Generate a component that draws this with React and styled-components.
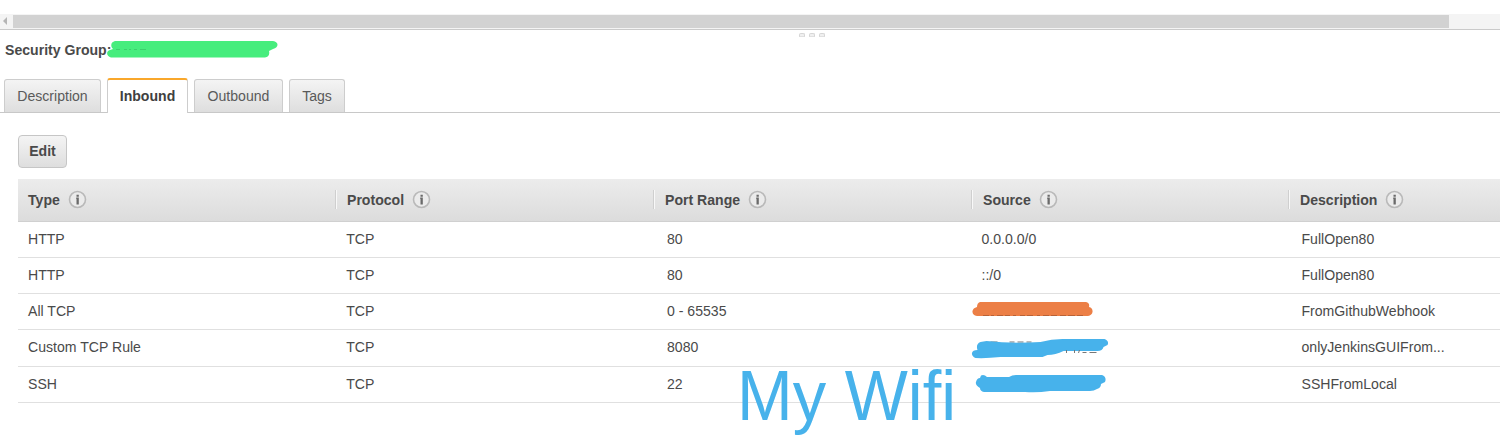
import React from "react";
import styled, { createGlobalStyle } from "styled-components";

const Global = createGlobalStyle`
  * { box-sizing: border-box; }
  body { margin: 0; background: #fff; overflow: hidden; }
`;

const Page = styled.main`
  position: relative;
  height: 447px;
  padding-top: 14px;
  overflow: hidden;
  font: 14.08px/20px "Liberation Sans", Arial, sans-serif;
  color: #4a4a4a;
  background: #fff;
`;

const ScrollBar = styled.div`
  display: flex;
  align-items: center;
  height: 16px;
  padding-bottom: 1px;
  background: #f4f4f4;
  border-bottom: 1px solid #cacaca;
`;

const ScrollArrow = styled.div`
  width: 13px;
  padding-left: 3px;
  display: flex;
`;

const ScrollThumb = styled.div`
  width: 1436px;
  height: 13px;
  background: #d2d2d2;
`;

const Splitter = styled.div`
  display: flex;
  height: 10px;
  gap: 4px;
  padding: 3px 0 0 799px;
`;

const Grip = styled.span`
  width: 6px;
  height: 4px;
  border: 1px solid #d6d6d6;
  border-bottom-color: #e0e0e0;
  border-radius: 2px 2px 0 0;
  background: #f0f0f0;
`;

const Title = styled.h1`
  display: flex;
  margin: 0;
  height: 20px;
  padding-left: 5px;
  font-size: 14.08px;
  line-height: 20px;
`;

const Scribble = styled.svg`
  display: block;
  flex: none;
  overflow: visible;
  margin-left: ${(p) => p.$left || 0}px;
  margin-bottom: ${(p) => p.$lift || 0}px;
`;

const Tabs = styled.nav`
  display: flex;
  align-items: flex-end;
  gap: 6px;
  height: 53px;
  padding-left: 4px;
  border-bottom: 1px solid #c8c8c8;
`;

const Tab = styled.button`
  width: ${(p) => p.$width}px;
  height: ${(p) => (p.$active ? 35 : 33)}px;
  margin-bottom: ${(p) => (p.$active ? -1 : 0)}px;
  padding: ${(p) => (p.$active ? "0 0 2px" : "0")};
  border: 1px solid #cdcdcd;
  border-top: ${(p) => (p.$active ? "2px solid #f9a72b" : "1px solid #cdcdcd")};
  border-bottom: 0;
  border-radius: 3px 3px 0 0;
  background: ${(p) => (p.$active ? "#fff" : "linear-gradient(#f4f4f4, #dedede)")};
  color: ${(p) => (p.$active ? "#404040" : "#5a5a5a")};
  font: ${(p) => (p.$active ? "bold" : "normal")} 14.08px/30px "Liberation Sans", Arial, sans-serif;
  white-space: nowrap;
`;

const Panel = styled.section`
  padding: 22px 0 0 18px;
`;

const EditButton = styled.button`
  display: block;
  width: 49px;
  height: 33px;
  padding: 0;
  border: 1px solid #c6c6c6;
  border-radius: 4px;
  background: linear-gradient(#f4f4f4, #dedede);
  color: #4a4a4a;
  font: bold 14.08px/31px "Liberation Sans", Arial, sans-serif;
`;

const Table = styled.div`
  margin-top: 11px;
`;

const HeaderRow = styled.div`
  display: grid;
  grid-template-columns: 317px 318px 318px 317px 212px;
  align-items: center;
  height: 42.5px;
  padding-bottom: 0.5px;
  background: linear-gradient(#ececec, #dcdcdc);
  border-bottom: 1px solid #d0d0d0;
`;

const HeaderCell = styled.div`
  display: flex;
  align-items: center;
  gap: 8px;
  height: 19px;
  padding-left: ${(p) => (p.$first ? 10 : 11)}px;
  border-left: ${(p) => (p.$first ? "0" : "1px solid #cfcfcf")};
  box-shadow: ${(p) => (p.$first ? "none" : "inset 1px 0 #f8f8f8")};
  font-weight: bold;
`;

const Row = styled.div`
  display: grid;
  grid-template-columns: 318.25px 320.75px 314.5px 320px 208.5px;
  align-items: center;
  height: 36.25px;
  padding-bottom: 1px;
  border-bottom: 1px solid #e0e0e0;
`;

const Cell = styled.div`
  padding-left: 10px;
  white-space: nowrap;
`;

const Note = styled.div`
  position: absolute;
  left: 737px;
  top: 356px;
  color: #47b2eb;
  font-size: 70px;
  line-height: 80px;
  white-space: pre;
  transform: scaleX(0.955);
  transform-origin: 0 0;
`;

const InfoIcon = () => (
  <svg width="19" height="19" viewBox="0 0 19 19">
    <circle cx="9.5" cy="9.5" r="8" fill="#ebebeb" stroke="#b9b9b9" strokeWidth="1.6" />
    <path d="M8.500 4.800h2.300v1.900H8.500zM8.200 7.600h2.600v6.900H8.500V9h-.3z" fill="#6a6a6a" />
  </svg>
);

const GreenMark = () => (
  <Scribble $left={-4} width="170" height="18" viewBox="107 40 170 18">
    <path
      d="M115 41H273C279 42 279 47 273 49L269 51C270 55 268 57 265 57.5H111C106 56 106 51 110 50L113 49C110 46 111 42 115 41Z"
      fill="#46ed7d"
    />
    <path d="M116 49.500h4M124 49.500h3M129 49.500h2M134 49.500h3M140 49.500h6" stroke="#3cd06d" />
  </Scribble>
);

const OrangeMark = () => (
  <Scribble $left={-10} $lift={2} width="122" height="16" viewBox="972 302 122 16">
    <path
      d="M980 302H1086Q1090 303 1089 307Q1093 308 1092.500 312Q1092 315 1088 316H977Q972 315 972.500 311Q973 308 977 307Q977 303 980 302Z"
      fill="#ec7f46"
    />
    <path d="M983 315.500h6m2 0h3m3 0h6m2 0h5m3 0h3m4 0h5m2 0h6m4 0h3m3 0h6m2 0h6m3 0h6m2 0h7m2 0h6" stroke="#b86237" />
  </Scribble>
);

const BlueMark = () => (
  <Scribble $left={-10} $lift={-3} width="136" height="20" viewBox="971.500 339 136 20">
    <path d="M990 342h7m12 0h5m3 0h6m3 0h5" stroke="#777" />
    <path
      d="M980 342L986 341Q1011 344 1040 342Q1051 339 1062 339H1104Q1109 341 1107 345L1103 347Q1102 351 1097 351H1063Q1055 355 1047 355L1042 357H1000Q986 358.500 975 358Q971 356 971.500 353Q972 350 977 350Q975 344 980 342Z"
      fill="#47b2eb"
    />
    <path d="M1066 350v3m8-3v3m5-3l-1 3m4-.5h4m3 0h7" stroke="#777" fill="none" />
  </Scribble>
);

const WideBlueMark = () => (
  <Scribble $left={-6} width="130" height="18" viewBox="976 375 130 18">
    <path
      d="M981 375.500Q984 374 987 377H1009Q1012 375 1016 375H1102Q1107 377 1105 382L1101 384Q1101 388 1097 389Q1094 391 1090 391H1050Q1037 393 1025 392H984Q980 391 980 388Q975 385 976 382Q977 378 980 378Z"
      fill="#47b2eb"
    />
  </Scribble>
);

const columns = ["Type", "Protocol", "Port Range", "Source", "Description"];
const rules = [
  ["HTTP", "TCP", "80", "0.0.0.0/0", "FullOpen80"],
  ["HTTP", "TCP", "80", "::/0", "FullOpen80"],
  ["All TCP", "TCP", "0 - 65535", <OrangeMark />, "FromGithubWebhook"],
  ["Custom TCP Rule", "TCP", "8080", <BlueMark />, "onlyJenkinsGUIFrom..."],
  ["SSH", "TCP", "22", <WideBlueMark />, "SSHFromLocal"],
];

export default function App() {
  return (
    <Page>
      <Global />
      <ScrollBar>
        <ScrollArrow>
          <svg width="5" height="8"><path d="M4 0v8L0 4z" fill="#b5b5b5" /></svg>
        </ScrollArrow>
        <ScrollThumb />
      </ScrollBar>
      <Splitter><Grip /><Grip /><Grip /></Splitter>
      <Title>Security Group:<GreenMark /></Title>
      <Tabs>
        <Tab $width={97}>Description</Tab>
        <Tab $width={81} $active>Inbound</Tab>
        <Tab $width={89}>Outbound</Tab>
        <Tab $width={56}>Tags</Tab>
      </Tabs>
      <Panel>
        <EditButton>Edit</EditButton>
        <Table>
          <HeaderRow>
            {columns.map((name, i) => (
              <HeaderCell key={name} $first={i === 0}>{name}<InfoIcon /></HeaderCell>
            ))}
          </HeaderRow>
          {rules.map((rule, i) => (
            <Row key={i}>
              {rule.map((value, j) => <Cell key={j}>{value}</Cell>)}
            </Row>
          ))}
        </Table>
      </Panel>
      <Note>My Wifi</Note>
    </Page>
  );
}
